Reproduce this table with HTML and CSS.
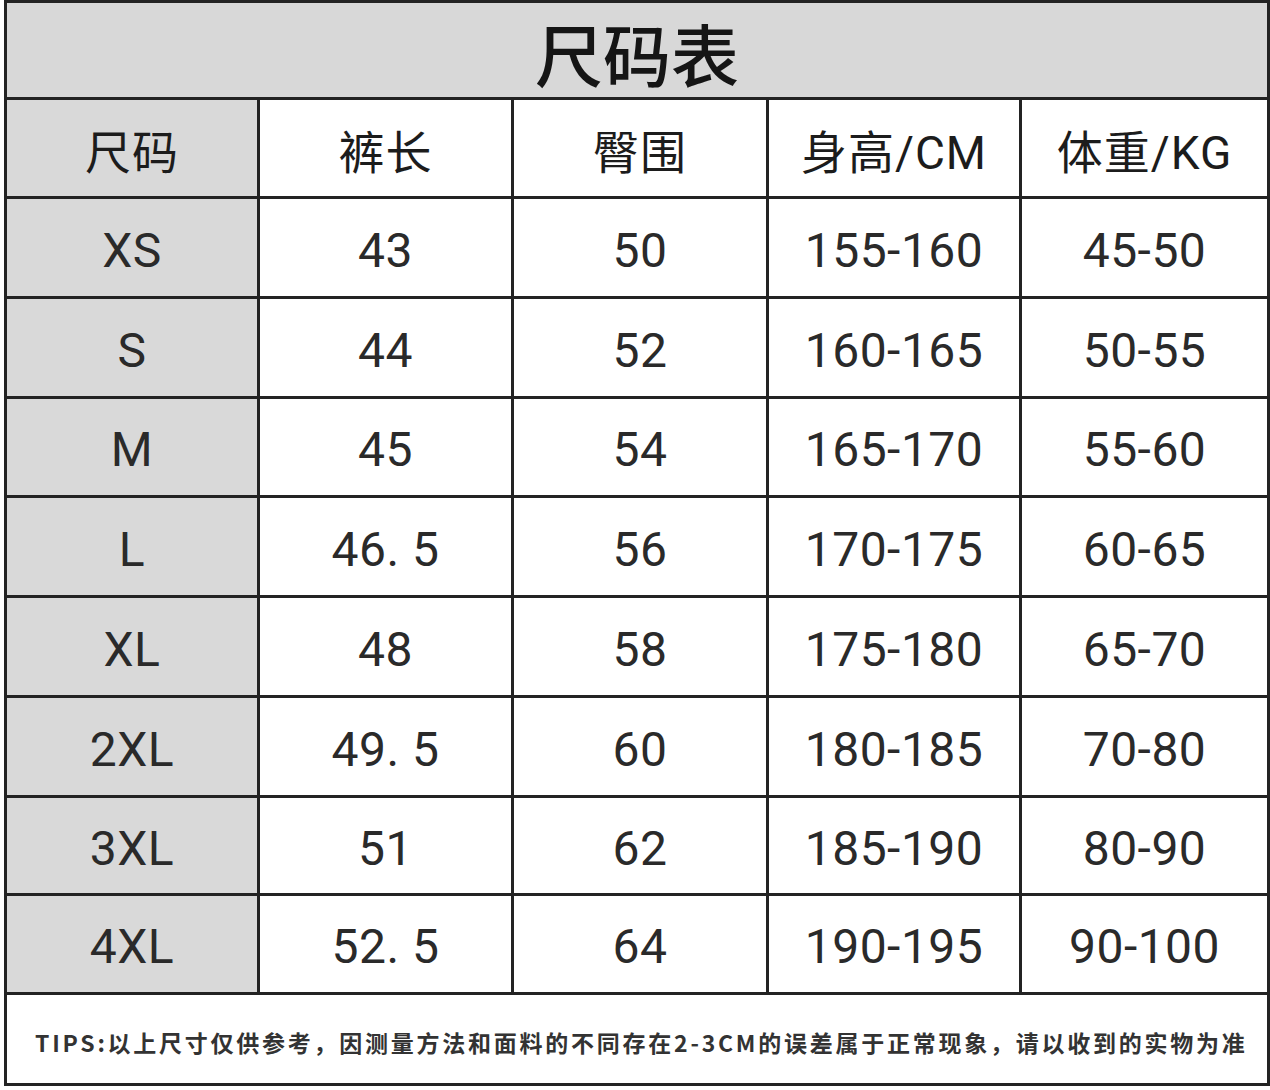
FILE: index.html
```html
<!DOCTYPE html>
<html lang="zh-CN">
<head>
<meta charset="utf-8">
<title>尺码表</title>
<link rel="stylesheet" href="styles.css">
</head>
<body>
<div class="chart">
  <div class="cell title">尺码表</div>

  <div class="cell head gray">尺码</div>
  <div class="cell head">裤长</div>
  <div class="cell head">臀围</div>
  <div class="cell head">身高/CM</div>
  <div class="cell head">体重/KG</div>

  <div class="cell gray">XS</div><div class="cell">43</div><div class="cell">50</div><div class="cell">155-160</div><div class="cell">45-50</div>
  <div class="cell gray">S</div><div class="cell">44</div><div class="cell">52</div><div class="cell">160-165</div><div class="cell">50-55</div>
  <div class="cell gray">M</div><div class="cell">45</div><div class="cell">54</div><div class="cell">165-170</div><div class="cell">55-60</div>
  <div class="cell gray">L</div><div class="cell">46. 5</div><div class="cell">56</div><div class="cell">170-175</div><div class="cell">60-65</div>
  <div class="cell gray">XL</div><div class="cell">48</div><div class="cell">58</div><div class="cell">175-180</div><div class="cell">65-70</div>
  <div class="cell gray">2XL</div><div class="cell">49. 5</div><div class="cell">60</div><div class="cell">180-185</div><div class="cell">70-80</div>
  <div class="cell gray">3XL</div><div class="cell">51</div><div class="cell">62</div><div class="cell">185-190</div><div class="cell">80-90</div>
  <div class="cell gray">4XL</div><div class="cell">52. 5</div><div class="cell">64</div><div class="cell">190-195</div><div class="cell">90-100</div>

  <div class="cell tips">TIPS:以上尺寸仅供参考，因测量方法和面料的不同存在2-3CM的误差属于正常现象，请以收到的实物为准</div>
</div>
</body>
</html>
```

FILE: styles.css
```css
html, body {
  margin: 0;
  padding: 0;
  background: #ffffff;
}

.chart {
  margin-left: 4px;
  width: 1266px;
  box-sizing: border-box;
  display: grid;
  grid-template-columns: 250px 251px 252px 250px 245px;
  grid-template-rows: 94px 96px 97px 97px 96px 97px 97px 97px 95px 96px 88px;
  gap: 3px;
  padding: 3px;
  background: #232323;
}

.cell {
  background: #ffffff;
  display: flex;
  align-items: center;
  justify-content: center;
  padding-top: 5px;
  font-family: Roboto, "Liberation Sans", "Noto Sans CJK SC", sans-serif;
  font-size: 48px;
  color: #2a2a2a;
  white-space: nowrap;
  letter-spacing: 0.5px;
}

.gray {
  background: #d9d9d9;
}

.title {
  grid-column: 1 / -1;
  background: #d8d8d8;
  font-family: "Noto Sans CJK SC", sans-serif;
  font-size: 68px;
  font-weight: 500;
  color: #151515;
  padding-top: 4px;
  letter-spacing: 0;
}

.head {
  font-family: Roboto, "Noto Sans CJK SC", sans-serif;
  font-size: 46px;
  color: #1c1c1c;
  letter-spacing: 1px;
  padding-top: 2px;
}

.tips {
  grid-column: 1 / -1;
  justify-content: flex-start;
  padding-left: 28px;
  padding-top: 6px;
  font-family: "Noto Sans CJK SC", sans-serif;
  font-size: 23px;
  font-weight: 700;
  letter-spacing: 2.75px;
  color: #333333;
}
```
